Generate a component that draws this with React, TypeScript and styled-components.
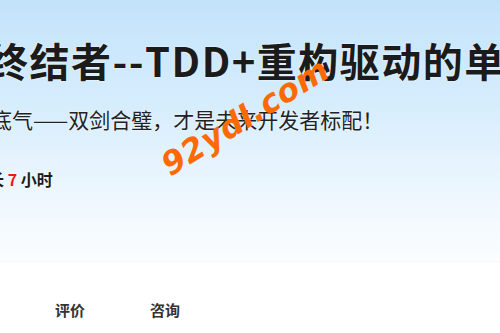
import React from 'react'
import styled, { createGlobalStyle } from 'styled-components'

const GlobalStyle = createGlobalStyle`
    html, body {
        margin: 0;
        padding: 0;
        background: #ffffff;
    }
    body {
        font-family: "Noto Sans CJK SC", "Noto Sans", sans-serif;
        overflow: hidden;
    }
`

const tabs = ['评价', '咨询']

const App: React.FC = () => {
    return (
        <Page>
            <GlobalStyle />
            <Hero>
                <Title>终结者--TDD+重构驱动的单元测试</Title>
                <Subtitle>底气——双剑合璧，才是未来开发者标配！</Subtitle>
                <Meta>
                    时长 <Hours>7</Hours> 小时
                </Meta>
                <Watermark>92ydl.com</Watermark>
            </Hero>
            <TabBar>
                {tabs.map((tab) => (
                    <Tab key={tab}>{tab}</Tab>
                ))}
            </TabBar>
        </Page>
    )
}

export default App

const Page = styled.div`
    width: 500px;
    height: 333px;
    overflow: hidden;
    background: #ffffff;
`

const Hero = styled.section`
    position: relative;
    height: 262px;
    padding-top: 38px;
    box-sizing: border-box;
    display: flex;
    flex-direction: column;
    background: linear-gradient(180deg, #c3e3fb 0%, #d6edfd 40%, #eef7fe 75%, #fbfdff 100%);
    border-bottom: 1px solid #f4f8fc;
`

const Line = styled.div`
    white-space: nowrap;
    color: #1b1b1b;
    text-shadow: 0 0 2px #ffffff;
`

const Title = styled(Line)`
    margin-left: -12px;
    font-size: 40px;
    line-height: 44px;
    font-weight: 700;
    letter-spacing: 1.5px;
`

const Subtitle = styled(Line)`
    margin-top: 23px;
    margin-left: -9px;
    font-size: 21px;
    line-height: 28px;
    color: #222;
`

const Meta = styled(Line)`
    margin-top: 36px;
    margin-left: -28px;
    font-size: 16px;
    line-height: 20px;
    font-weight: 700;
`

const Hours = styled.span`
    color: #f5141e;
`

const Watermark = styled.div`
    position: absolute;
    left: 150px;
    top: 98px;
    transform: rotate(-32deg);
    transform-origin: center;
    font-family: "DejaVu Sans", sans-serif;
    font-size: 32px;
    font-weight: 700;
    font-style: italic;
    color: #ff6a00;
    letter-spacing: 0.5px;
    white-space: nowrap;
`

const TabBar = styled.nav`
    display: flex;
    gap: 65px;
    padding: 36px 0 0 55px;
`

const Tab = styled.div`
    font-size: 15px;
    line-height: 24px;
    font-weight: 700;
    color: #333333;
    cursor: pointer;
`
